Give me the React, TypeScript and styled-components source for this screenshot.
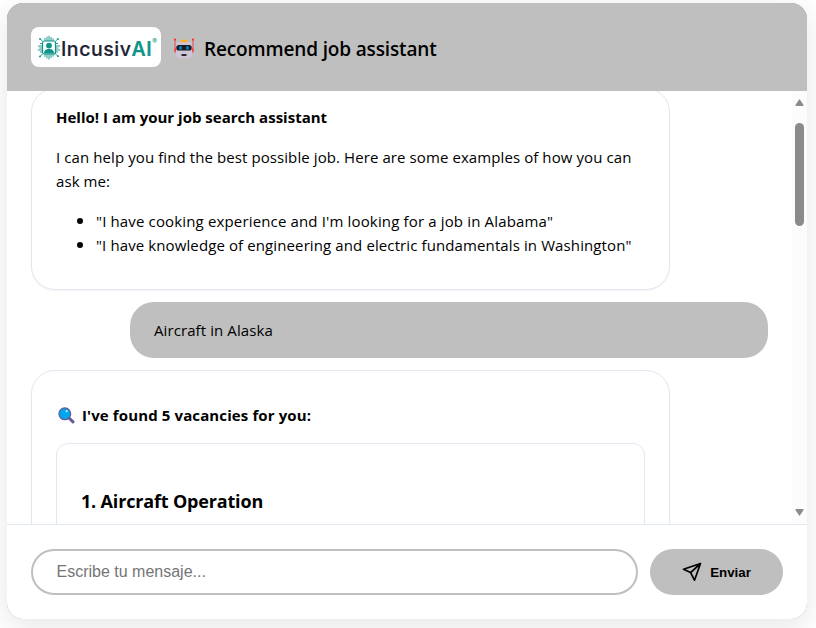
import React from "react";
import styled, { createGlobalStyle } from "styled-components";

const GlobalStyle = createGlobalStyle`
  *, *::before, *::after { box-sizing: border-box; }
  html, body, #root { height: 100%; margin: 0; }
  body {
    overflow: hidden;
    background: #fff;
    color: #000;
    font-family: "Open Sans", "Noto Sans", sans-serif;
    font-size: 15px;
    line-height: 24px;
  }
  p, ul, h2, h3 { margin: 0; }
`;

const Page = styled.main`
  padding: 3px 9px 9px 7px;
  height: 100%;
`;

const ChatFrame = styled.section`
  display: flex;
  flex-direction: column;
  height: 616px;
  border-radius: 16px;
  overflow: hidden;
  background: #8a8a8a;
  box-shadow: 0 8px 32px rgba(0, 0, 0, 0.1);
`;

const Header = styled.header`
  display: flex;
  align-items: center;
  flex: none;
  height: 88px;
  padding: 0 24px;
  background: #bfbfbf;
`;

const Logo = styled.div`
  display: flex;
  align-items: center;
  width: 130px;
  height: 40px;
  padding-left: 6px;
  border-radius: 8px;
  background: #fff;
  svg { flex: none; margin-top: 2px; }
`;

const LogoText = styled.span`
  display: flex;
  padding-top: 3px;
  font: 500 19.5px/24px Inter, sans-serif;
  letter-spacing: 0.55px;
  color: #1e2233;
  -webkit-text-stroke: 0.2px currentColor;
  em { font-style: normal; font-weight: 600; color: #0f9488; }
  sup { align-self: flex-start; font-size: 7px; line-height: 8px; color: #0f9488; -webkit-text-stroke: 0; margin-top: 1px; }
`;

const Title = styled.h2`
  display: flex;
  align-items: center;
  gap: 9px;
  margin-left: 12px;
  padding-top: 3px;
  font-size: 19px;
  font-weight: 600;
  letter-spacing: -0.15px;
  white-space: nowrap;
  svg { margin-top: -2px; }
`;

const Conversation = styled.div`
  display: flex;
  flex: none;
  height: 433px;
  background: #fff;
  overflow: hidden;
`;

const Messages = styled.div`
  display: flex;
  flex: 1;
  flex-direction: column;
  gap: 12px;
  padding: 0 24px;
  margin-top: -3px;
`;

const Bubble = styled.article<{ $user?: boolean }>`
  flex: none;
  width: ${(p) => (p.$user ? 638 : 639)}px;
  align-self: ${(p) => (p.$user ? "flex-end" : "flex-start")};
  padding: 16px 24px;
  border: ${(p) => (p.$user ? "0" : "1px solid #e2e8f0")};
  border-radius: 24px;
  background: ${(p) => (p.$user ? "#bfbfbf" : "#fff")};
  box-shadow: ${(p) => (p.$user ? "none" : "0 1px 2px rgba(0, 0, 0, 0.05)")};
`;

const Line = styled.p<{ $bold?: boolean; $track?: number }>`
  font-weight: ${(p) => (p.$bold ? 700 : 400)};
  letter-spacing: ${(p) => p.$track ?? 0.09}px;
  & + & { margin-top: 16px; }
`;

const Examples = styled.ul`
  margin: 15px 0 17px;
  padding-left: 40px;
  white-space: nowrap;
`;

const Example = styled.li<{ $track: number }>`
  height: 24px;
  letter-spacing: ${(p) => p.$track}px;
  &::marker { font-size: 18px; }
`;

const ResultHeading = styled.p`
  display: flex;
  align-items: center;
  gap: 7px;
  margin: 16px 0;
  padding-left: 2px;
  font-weight: 700;
  letter-spacing: 0.12px;
`;

const Vacancy = styled.div`
  height: 240px;
  padding: 45px 24px;
  border: 1px solid #e2e8f0;
  border-radius: 12px;
`;

const VacancyTitle = styled.h3`
  font-size: 18px;
  font-weight: 700;
  letter-spacing: -0.17px;
`;

const Scrollbar = styled.div`
  display: flex;
  flex-direction: column;
  align-items: center;
  width: 15px;
  padding: 8px 0;
  background: #fcfcfc;
`;

const Thumb = styled.div`
  width: 9px;
  height: 103px;
  margin: 17px 0 auto;
  border-radius: 5px;
  background: #8b8b8b;
`;

const Composer = styled.form`
  display: flex;
  flex: 1;
  align-items: flex-start;
  gap: 12px;
  padding: 24px;
  border-top: 1px solid #e2e8f0;
  background: #fff;
`;

const MessageInput = styled.input`
  flex: 1;
  min-width: 0;
  height: 46px;
  padding: 0 23.5px;
  border: 2px solid #bfbfbf;
  border-radius: 24px;
  background: #fff;
  font: 16px "Liberation Sans", Arial, sans-serif;
  outline: none;
  &::placeholder { color: #757575; opacity: 1; }
`;

const SendButton = styled.button`
  display: flex;
  align-items: center;
  justify-content: center;
  gap: 8px;
  width: 133px;
  height: 46px;
  padding: 0;
  border: 0;
  border-radius: 24px;
  background: #bfbfbf;
  color: #000;
  font: 600 13.333px "Liberation Sans", Arial, sans-serif;
`;

const ChipIcon = () => (
  <svg width="24" height="26" viewBox="0 0 24 26" fill="none" stroke="#0f9488" strokeWidth="0.9">
    <rect x="5.5" y="6" width="13" height="13" rx="2" strokeWidth="1.2" />
    <path d="M8 6V3M10 6V1.5M12 6V0.8M14 6V2M16 6V3.4M8 19v3M10 19v4.5M12 19v5.6M14 19v4M16 19v2.6M5.5 8.5H3M5.5 11H1M5.5 13H2.2M5.5 15H0.8M5.5 17H3M18.5 8.5H21M18.5 11h4.7M18.5 13h3M18.5 15h4.7M18.5 17H21M5.5 6 3 4M18.5 6 21 4M5.5 19 3 21.5M18.5 19l2.5 2.2" />
    <g fill="#0f9488" stroke="none">
      <circle cx="12" cy="10.6" r="2.9" />
      <path d="M7 18.5c0-3.2 2.2-4.6 5-4.6s5 1.4 5 4.6z" />
      <circle cx="3" cy="4" r=".9" /><circle cx="21" cy="4" r=".9" />
      <circle cx="3" cy="21.5" r=".9" /><circle cx="21" cy="21.2" r=".9" />
    </g>
  </svg>
);

const RobotIcon = () => (
  <svg width="22" height="22" viewBox="0 0 22 22">
    <path d="M2 3v12M20 3v12" stroke="#e94b50" strokeWidth="1" />
    <circle cx="2" cy="2.6" r="1.1" fill="#f8312f" /><circle cx="20" cy="2.6" r="1.1" fill="#f8312f" />
    <rect x="1.3" y="11" width="2" height="4.5" rx="1" fill="#e94b50" /><rect x="18.7" y="11" width="2" height="4.5" rx="1" fill="#e94b50" />
    <path d="M5.5 5h11a2.5 2.5 0 0 1 2.5 2.5V17c0 3-1.5 4.5-4.5 4.5h-7C4.5 21.5 3 20 3 17V7.5A2.5 2.5 0 0 1 5.5 5z" fill="#cdc4d6" />
    <rect x="7.5" y="2.8" width="7" height="2.4" rx="1" fill="#ffb02e" />
    <rect x="3.3" y="8" width="15.4" height="5.6" rx="2.6" fill="#1d1d20" />
    <ellipse cx="7.5" cy="10.8" rx="1.4" ry="1.9" fill="#0086d6" /><ellipse cx="14.5" cy="10.8" rx="1.4" ry="1.9" fill="#0086d6" />
    <rect x="8.3" y="17" width="5.4" height="2" rx="1" fill="#2a2530" />
  </svg>
);

const SearchIcon = () => (
  <svg width="17" height="17" viewBox="0 0 17 17">
    <path d="m11 11 4 3.8" stroke="#635994" strokeWidth="3" strokeLinecap="round" />
    <circle cx="6.8" cy="6.8" r="5.9" fill="#00a6ed" stroke="#635994" strokeWidth="1.2" />
    <circle cx="8.7" cy="4.2" r="1.1" fill="#bfeaff" />
  </svg>
);

const PlaneIcon = () => (
  <svg width="20" height="20" viewBox="0 0 20 20" fill="none" stroke="#000" strokeWidth="1.7" strokeLinejoin="round">
    <path d="M18.5 1.5 1.5 7.2l7.1 3.4 3.9 7.6zM18.5 1.5l-9.9 9.1" />
  </svg>
);

const Arrow = ({ down }: { down?: boolean }) => (
  <svg width="9" height="7" viewBox="0 0 9 7">
    <path d={down ? "M1 .7h7L4.5 6z" : "M1 6.3h7L4.5 1z"} fill="#8b8b8b" stroke="#8b8b8b" strokeWidth="1.3" strokeLinejoin="round" />
  </svg>
);

export default function App() {
  return (
    <>
      <GlobalStyle />
      <Page>
        <ChatFrame>
          <Header>
            <Logo>
              <ChipIcon />
              <LogoText>Incusiv<em>AI</em><sup>®</sup></LogoText>
            </Logo>
            <Title><RobotIcon />Recommend job assistant</Title>
          </Header>
          <Conversation>
            <Messages>
              <Bubble>
                <Line $bold $track={0.01}>Hello! I am your job search assistant</Line>
                <Line>I can help you find the best possible job. Here are some examples of how you can ask me:</Line>
                <Examples>
                  <Example $track={0.15}>"I have cooking experience and I'm looking for a job in Alabama"</Example>
                  <Example $track={0.11}>"I have knowledge of engineering and electric fundamentals in Washington"</Example>
                </Examples>
              </Bubble>
              <Bubble $user><Line>Aircraft in Alaska</Line></Bubble>
              <Bubble>
                <ResultHeading><SearchIcon />I've found 5 vacancies for you:</ResultHeading>
                <Vacancy><VacancyTitle>1. Aircraft Operation</VacancyTitle></Vacancy>
              </Bubble>
            </Messages>
            <Scrollbar><Arrow /><Thumb /><Arrow down /></Scrollbar>
          </Conversation>
          <Composer>
            <MessageInput placeholder="Escribe tu mensaje..." />
            <SendButton type="button"><PlaneIcon />Enviar</SendButton>
          </Composer>
        </ChatFrame>
      </Page>
    </>
  );
}
